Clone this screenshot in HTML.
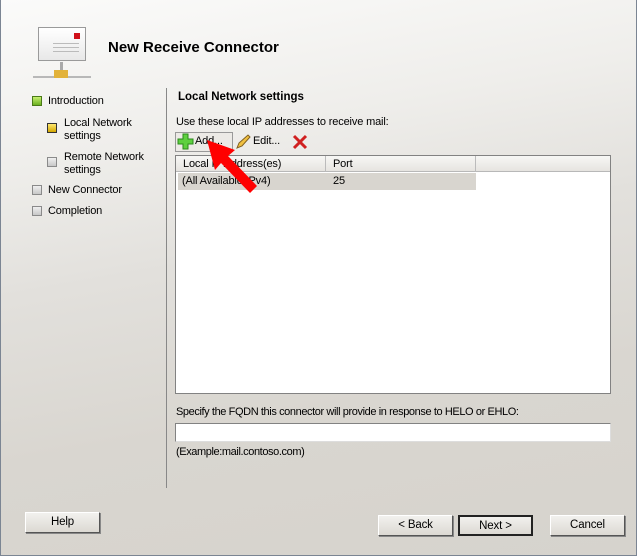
<!DOCTYPE html>
<html><head><style>
*{margin:0;padding:0;box-sizing:border-box}
body{width:637px;height:556px;overflow:hidden;font-family:"Liberation Sans",sans-serif;font-size:11px;letter-spacing:-0.15px;color:#000}
#w{position:absolute;left:0;top:0;width:637px;height:556px;background:linear-gradient(170deg,#fbfbfa 0%,#efeeeb 25%,#e2e0dc 45%,#d9d6d0 70%,#d6d3cd 100%);border:1px solid #7b8593;border-top:none}
.a{position:absolute;white-space:nowrap}
.btn{position:absolute;height:21px;background:linear-gradient(#f2f1ee,#dcd9d3);border:1px solid #fff;border-right-color:#555;border-bottom-color:#555;box-shadow:1px 1px 0 #888;text-align:center;line-height:19px;font-size:11.5px}
.sq{position:absolute;width:10px;height:10px;border:1px solid #8a8a8a;background:linear-gradient(#f0f0f0,#c8c8c8)}
</style></head><body><div id="w">
<div class="a" style="left:37px;top:27px;width:48px;height:34px;background:linear-gradient(#fff,#e8e8e8);border:1px solid #9a9a9a"></div>
<div class="a" style="left:73px;top:33px;width:6px;height:6px;background:#d0101a"></div>
<div class="a" style="left:52px;top:43px;width:26px;height:1px;background:#bbb"></div>
<div class="a" style="left:52px;top:47px;width:26px;height:1px;background:#bbb"></div>
<div class="a" style="left:52px;top:51px;width:26px;height:1px;background:#bbb"></div>
<div class="a" style="left:59px;top:62px;width:3px;height:8px;background:#aaa"></div>
<div class="a" style="left:32px;top:76px;width:58px;height:2px;background:#b8b8b8"></div>
<div class="a" style="left:53px;top:70px;width:14px;height:8px;background:#e2b23a"></div>
<div class="a" style="left:107px;top:39px;font-size:15px;font-weight:bold;letter-spacing:0">New Receive Connector</div>
<div class="sq" style="left:31px;top:96px;background:linear-gradient(#c8f070,#6ab020);border-color:#4a7a18"></div>
<div class="a" style="left:47px;top:95px">Introduction</div>
<div class="sq" style="left:46px;top:123px;background:linear-gradient(#ffe870,#d4a800);border-color:#333"></div>
<div class="a" style="left:63px;top:117px;line-height:13px">Local Network<br>settings</div>
<div class="sq" style="left:46px;top:157px"></div>
<div class="a" style="left:63px;top:151px;line-height:13px">Remote Network<br>settings</div>
<div class="sq" style="left:31px;top:185px"></div>
<div class="a" style="left:47px;top:184px">New Connector</div>
<div class="sq" style="left:31px;top:206px"></div>
<div class="a" style="left:47px;top:205px">Completion</div>
<div class="a" style="left:165px;top:88px;width:1px;height:400px;background:#888"></div>
<div class="a" style="left:177px;top:91px;font-weight:bold;font-size:11.5px;letter-spacing:0">Local Network settings</div>
<div class="a" style="left:175px;top:116px">Use these local IP addresses to receive mail:</div>
<div class="a" style="left:174px;top:132px;width:58px;height:20px;border:1px solid #999;background:#eceae6"></div>
<svg class="a" style="left:176px;top:133px" width="17" height="17"><path d="M6 1h5v5h5v5h-5v5h-5v-5h-5v-5h5z" fill="#5ed040" stroke="#2a8a1a"/></svg>
<div class="a" style="left:194px;top:135px">Add...</div>
<svg class="a" style="left:234px;top:134px" width="16" height="16"><path d="M2 14l2-5 9-8 2 2-8 9z" fill="#f0c040" stroke="#806020" stroke-width="1"/></svg>
<div class="a" style="left:252px;top:135px">Edit...</div>
<svg class="a" style="left:291px;top:134px" width="16" height="16"><path d="M2 2l12 12M14 2l-12 12" stroke="#d02020" stroke-width="3"/></svg>
<div class="a" style="left:174px;top:155px;width:436px;height:239px;background:#fff;border:1px solid #828282"></div>
<div class="a" style="left:175px;top:156px;width:434px;height:16px;background:linear-gradient(#f7f7f5,#e6e4e0);border-bottom:1px solid #b8b8b8"></div>
<div class="a" style="left:324px;top:156px;width:1px;height:16px;background:#bbb"></div>
<div class="a" style="left:474px;top:156px;width:1px;height:16px;background:#bbb"></div>
<div class="a" style="left:182px;top:158px">Local IP Address(es)</div>
<div class="a" style="left:332px;top:158px">Port</div>
<div class="a" style="left:177px;top:173px;width:298px;height:17px;background:#d8d5cf"></div>
<div class="a" style="left:181px;top:175px">(All Available IPv4)</div>
<div class="a" style="left:332px;top:175px">25</div>
<svg class="a" style="left:200px;top:134px" width="70" height="70"><path d="M6 6L34 16 27 22 56 52 49 59 20 29 14 36z" fill="#ff0000"/></svg>
<div class="a" style="left:175px;top:406px;letter-spacing:-0.4px">Specify the FQDN this connector will provide in response to HELO or EHLO:</div>
<div class="a" style="left:174px;top:423px;width:436px;height:19px;background:#fff;border:1px solid #828282;border-right-color:#ddd;border-bottom-color:#ddd"></div>
<div class="a" style="left:175px;top:446px;letter-spacing:-0.4px">(Example:mail.contoso.com)</div>
<div class="btn" style="left:24px;top:512px;width:75px">Help</div>
<div class="btn" style="left:377px;top:515px;width:75px">&lt; Back</div>
<div class="btn" style="left:457px;top:515px;width:75px;border:2px solid #222;box-shadow:none">Next &gt;</div>
<div class="btn" style="left:549px;top:515px;width:75px">Cancel</div>
</div></body></html>
